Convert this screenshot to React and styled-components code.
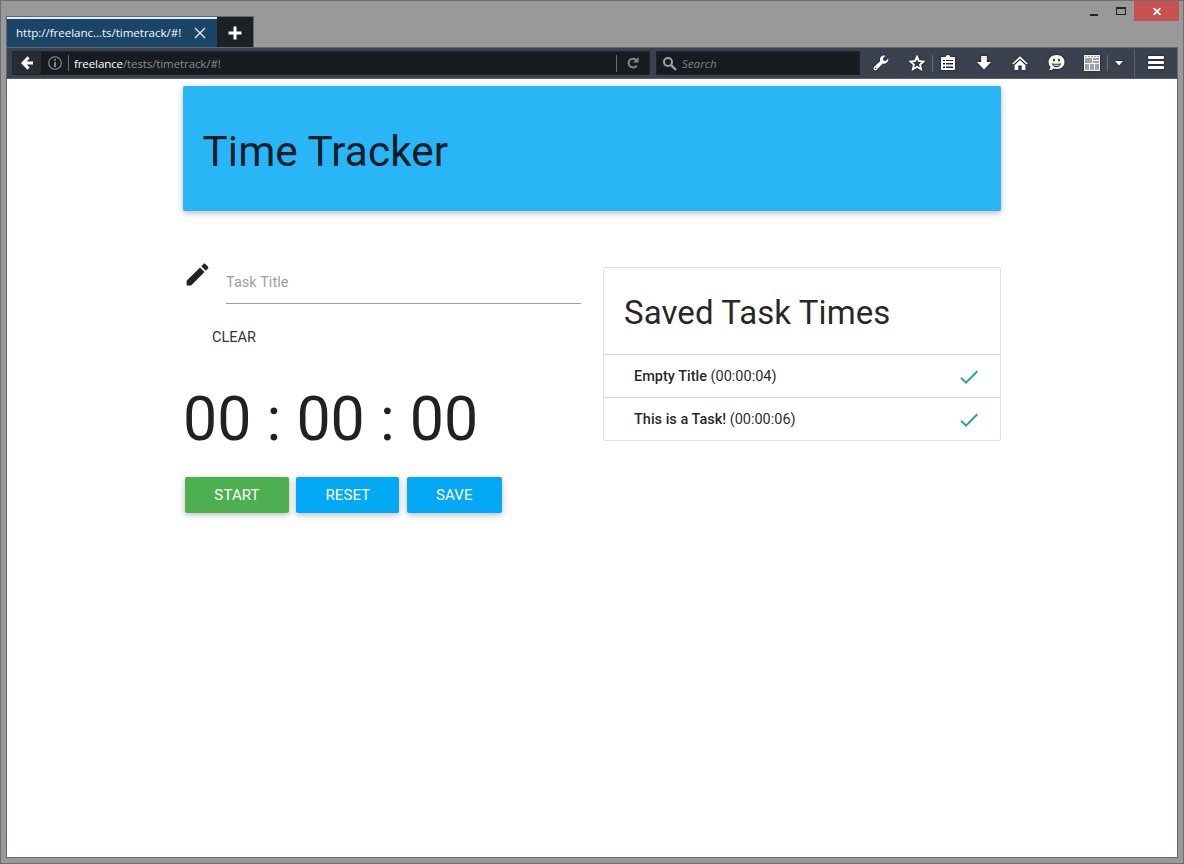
import React from "react";
import styled, { createGlobalStyle } from "styled-components";

const Global = createGlobalStyle`
  *, *::before, *::after { box-sizing: border-box; }
  body { margin: 0; overflow: hidden; }
  h1, h2, h3, p, ul { margin: 0; padding: 0; font-weight: 400; }
  button { font: inherit; border: 0; padding: 0; background: none; color: inherit; }
  svg { display: block; flex: none; }
`;

const Window = styled.div`
  width: 1184px;
  height: 864px;
  display: flex;
  flex-direction: column;
  background: #999;
  border: 1px solid #6e6e6e;
  padding: 0 5px 5px;
  font-family: "Open Sans", "Noto Sans", sans-serif;
  font-size: 11.6px;
`;

const TitleBar = styled.header`
  height: 46px;
  display: flex;
  align-items: flex-start;
  justify-content: space-between;
`;

const Tabs = styled.div`
  display: flex;
  height: 31px;
  margin-top: 15px;
  border: 1px solid #5e6a73;
  border-bottom: 0;
  background: #1c2126;
`;

const Tab = styled.div`
  width: 210px;
  display: flex;
  align-items: center;
  justify-content: space-between;
  padding: 0 11px 0 9px;
  background: #1b4566;
  border-top: 2px solid #d7efff;
  color: #f5f7fa;
  white-space: nowrap;
`;

const TabTitle = styled.span`
  padding-bottom: 2px;
  letter-spacing: -0.05px;
`;

const NewTab = styled.button`
  width: 36px;
  display: grid;
  place-items: center;
  padding-top: 1px;
`;

const WindowControls = styled.div`
  display: flex;
  height: 20px;
  margin-right: -1px;
`;

const WindowButton = styled.button`
  width: ${(p) => p.$w}px;
  height: 20px;
  display: grid;
  place-items: center;
  background: ${(p) => (p.$danger ? "#c75050" : "transparent")};
`;

const Browser = styled.div`
  flex: 1;
  display: flex;
  flex-direction: column;
  border: 1px solid #5e6a73;
`;

const Toolbar = styled.nav`
  height: 31px;
  flex: none;
  display: flex;
  align-items: center;
  padding: 0 0 0 5px;
  background: #3b424f;
  border-bottom: 1px solid #5c6065;
`;

const Field = styled.div`
  flex: none;
  width: ${(p) => p.$w}px;
  height: 24px;
  margin-right: 6px;
  padding-left: ${(p) => p.$inset || 0}px;
  display: flex;
  align-items: center;
  background: #181b1f;
  border: 1px solid #1f242a;
  border-radius: 1px;
  color: #8a8d90;
`;

const BackButton = styled.button`
  width: 28px;
  height: 22px;
  display: grid;
  place-items: center;
  background: #272c35;
`;

const IdentityButton = styled.button`
  width: 27px;
  display: grid;
  place-items: center;
`;

const Separator = styled.span`
  width: 1px;
  height: ${(p) => p.$h || 16}px;
  margin-left: ${(p) => p.$gap || 0}px;
  background: ${(p) => p.$color || "#666c75"};
`;

const Address = styled.span`
  flex: 1;
  padding-left: 5px;
  letter-spacing: -0.14px;
  white-space: nowrap;
  b { font-weight: 400; color: #fff; }
`;

const ReloadButton = styled.button`
  width: 32px;
  display: grid;
  place-items: center;
`;

const SearchHint = styled.span`
  padding-left: 5px;
  font-style: italic;
  color: #7e8184;
`;

const Tools = styled.div`
  flex: 1;
  height: 30px;
  display: flex;
  align-items: center;
`;

const Tool = styled.button`
  width: ${(p) => p.$w || 30}px;
  height: 30px;
  margin-left: ${(p) => p.$gap || 0}px;
  display: grid;
  place-items: center;
  svg { filter: drop-shadow(0 0 1px #10151c); }
`;

const Page = styled.main`
  flex: 1;
  background: #fff;
  font-family: Roboto, sans-serif;
  font-size: 14.5px;
  line-height: 1.5;
  color: rgba(0, 0, 0, 0.87);
`;

const Container = styled.div`
  width: 818px;
  margin: 0 auto;
  padding-top: 7px;
`;

const Banner = styled.section`
  height: 125px;
  padding: 43px 19.5px 0;
  border-radius: 2px;
  background: #29b6f6;
  box-shadow: 0 2px 5px 0 rgba(0, 0, 0, 0.16), 0 2px 10px 0 rgba(0, 0, 0, 0.12);
`;

const BannerTitle = styled.h1`
  font-size: 42.34px;
  line-height: 46.6px;
  letter-spacing: 0.05px;
`;

const Columns = styled.div`
  display: grid;
  grid-template-columns: 398px 398px;
  justify-content: space-between;
  align-items: start;
  margin-top: 56px;
`;

const Tracker = styled.section`
  display: flex;
  flex-direction: column;
  align-items: flex-start;
`;

const TitleField = styled.label`
  width: 100%;
  height: 37px;
  display: flex;
  justify-content: space-between;
  align-items: flex-end;
  svg { align-self: flex-start; margin: -7px 0 0 -0.5px; }
`;

const TitleInput = styled.span`
  width: 355px;
  height: 43px;
  padding-top: 11px;
  border-bottom: 1px solid #9e9e9e;
  color: #9e9e9e;
  letter-spacing: 0.05px;
`;

const FlatButton = styled.button`
  height: 36px;
  margin-top: 16px;
  padding: 0 29px;
  line-height: 36px;
  color: #343434;
  text-transform: uppercase;
`;

const Clock = styled.h2`
  margin: 30px 0 0 0;
  font-size: 60.9px;
  line-height: 67px;
  white-space: pre;
`;

const Actions = styled.div`
  display: flex;
  gap: 7.45px;
  margin: 24px 0 0 2px;
`;

const ActionButton = styled.button`
  width: ${(p) => p.$w}px;
  height: 36px;
  padding-top: 1px;
  border-radius: 2px;
  background: ${(p) => (p.$primary ? "#4caf50" : "#03a9f4")};
  color: #fff;
  font-size: 15px;
  line-height: 35px;
  letter-spacing: 0.12px;
  text-align: center;
  text-transform: uppercase;
  box-shadow: 0 2px 5px 0 rgba(0, 0, 0, 0.16), 0 2px 10px 0 rgba(0, 0, 0, 0.12);
`;

const Collection = styled.ul`
  list-style: none;
  border: 1px solid #e0e0e0;
  border-radius: 2px;
`;

const CollectionHeader = styled.li`
  height: 86px;
  padding: 27px 20px 0;
`;

const CollectionTitle = styled.h3`
  font-size: 33.06px;
  line-height: 36.4px;
  letter-spacing: 0.06px;
`;

const CollectionItem = styled.li`
  height: 43px;
  display: flex;
  justify-content: space-between;
  padding: 11px 19.5px 0 30px;
  border-top: 1px solid #e0e0e0;
  line-height: 22px;
  b { font-weight: 500; }
  svg { margin-top: -1px; }
`;

const tasks = [
  { title: "Empty Title", time: "00:00:04" },
  { title: "This is a Task!", time: "00:00:06" },
];

const Check = () => (
  <svg width="24" height="24" viewBox="0 0 24 24" fill="#26a69a">
    <path d="M9 16.17 4.83 12l-1.42 1.41L9 19 21 7l-1.41-1.41z" />
  </svg>
);

export default function App() {
  return (
    <Window>
      <Global />
      <TitleBar>
        <Tabs>
          <Tab>
            <TabTitle>http://freelanc...ts/timetrack/#!</TabTitle>
            <svg width="12" height="12" viewBox="0 0 12 12" stroke="#e8eef4" strokeWidth="1.3">
              <path d="M1 1l10 10M11 1L1 11" />
            </svg>
          </Tab>
          <NewTab>
            <svg width="14" height="14" viewBox="0 0 14 14" fill="#fff">
              <path d="M5.5 0.5h3v5h5v3h-5v5h-3v-5h-5v-3h5z" />
            </svg>
          </NewTab>
        </Tabs>
        <WindowControls>
          <WindowButton $w={27}>
            <svg width="8" height="12" viewBox="0 0 8 12" fill="#222">
              <path d="M0 9h8v2H0z" />
            </svg>
          </WindowButton>
          <WindowButton $w={27}>
            <svg width="10" height="8" viewBox="0 0 10 8" fill="#222">
              <path d="M0 0h10v8H0zM1 2v5h8V2z" fillRule="evenodd" />
            </svg>
          </WindowButton>
          <WindowButton $w={45} $danger>
            <svg width="8" height="7" viewBox="0 0 8 7" stroke="#fff" strokeWidth="1.8">
              <path d="M0.5 0l7 7M7.5 0l-7 7" />
            </svg>
          </WindowButton>
        </WindowControls>
      </TitleBar>
      <Browser>
        <Toolbar>
          <Field $w={638}>
            <BackButton>
              <svg width="12" height="14" viewBox="0 0 12 14" fill="none" stroke="#fff" strokeWidth="3">
                <path d="M7.6 1.4L2.1 7l5.5 5.6M2.5 7H12" />
              </svg>
            </BackButton>
            <IdentityButton>
              <svg width="14" height="14" viewBox="0 0 14 14" fill="none" stroke="#8f9193">
                <circle cx="7" cy="7" r="6.3" strokeWidth="1.1" />
                <path d="M7 3v1.8M7 6v5" strokeWidth="1.8" />
              </svg>
            </IdentityButton>
            <Separator />
            <Address><b>freelance</b>/tests/timetrack/#!</Address>
            <Separator $h={17} />
            <ReloadButton>
              <svg width="12" height="12" viewBox="0 0 12 12" fill="none" stroke="#85888b" strokeWidth="2">
                <path d="M9.6 8.6A4.4 4.4 0 1 1 9 2.8" />
                <path d="M11.5 0v5.6H6z" fill="#85888b" stroke="none" />
              </svg>
            </ReloadButton>
          </Field>
          <Field $w={204} $inset={5}>
            <svg width="15" height="15" viewBox="0 0 15 15" fill="none" stroke="#a0a2a4">
              <circle cx="6" cy="6" r="4" strokeWidth="2" />
              <path d="M9 9l5 5" strokeWidth="2.4" />
            </svg>
            <SearchHint>Search</SearchHint>
          </Field>
          <Tools>
            <Tool>
              <svg width="16" height="16" viewBox="0 0 16 16" fill="#fff">
                <path d="M15.2 3.6l-2.6 2.5-2.2-.5-.5-2.1L12.4.9C10.6.2 8.6.7 7.6 2.2c-.8 1.2-.9 2.6-.4 3.8L1 12c-.7.7-.7 1.9 0 2.7s1.9.7 2.7 0l6.1-6.2c1.3.4 2.8.2 3.9-.7 1.4-1.1 1.9-2.7 1.5-4.2zM2.6 14.1a.8.8 0 1 1 0-1.6.8.8 0 0 1 0 1.6z" />
              </svg>
            </Tool>
            <Tool $gap={6}>
              <svg width="16" height="16" viewBox="0 0 16 16" fill="none" stroke="#fff" strokeWidth="1.9">
                <path d="M8 1.7l1.9 4.3 4.7.5-3.5 3.1 1 4.6L8 11.8l-4.1 2.4 1-4.6L1.4 6.5 6.1 6z" />
              </svg>
            </Tool>
            <Separator $h={17} />
            <Tool>
              <svg width="14" height="16" viewBox="0 0 14 16" fill="#fff">
                <path fillRule="evenodd" d="M0 3q0-1 1-1h3.5q.3-2 2.5-2t2.5 2H13q1 0 1 1v11q0 1-1 1H1q-1 0-1-1zM2 5v1h2V5zM5 5v1h7V5zM2 8v1.5h2V8zM5 8v1.5h7V8zM2 11.5V13h2v-1.5zM5 11.5V13h7v-1.5z" />
              </svg>
            </Tool>
            <Tool $w={42}>
              <svg width="14" height="14" viewBox="0 0 14 14" fill="#fff">
                <path d="M4.2 0h5.6v6H14l-7 7.5L0 6h4.2z" />
              </svg>
            </Tool>
            <Tool>
              <svg width="16" height="15" viewBox="0 0 16 15" fill="none" stroke="#fff">
                <path d="M.8 8L8 1.3 15.2 8" strokeWidth="1.7" />
                <path d="M8 4l5.5 5.2V14H9.7V9.500H6.3V14H2.5V9.2z" fill="#fff" stroke="none" />
              </svg>
            </Tool>
            <Tool $w={42}>
              <svg width="17" height="16" viewBox="0 0 17 16" fill="#fff">
                <path d="M8.7 0C13.2 0 16.5 2.8 16.5 7s-3.3 7-7.8 7c-1.2 0-2.2-.2-3.1-.5C4.4 14.6 2.8 15.2 1 15c1-.8 1.5-1.9 1.5-3C1.3 10.700.6 9 .6 7c0-4.2 3.5-7 8.1-7z" />
                <ellipse cx="6" cy="5" rx="1" ry="1.5" fill="#2d333d" />
                <ellipse cx="11" cy="5" rx="1" ry="1.5" fill="#2d333d" />
                <path d="M3.8 8.2q4.7 1.2 9.4 0-1 4-4.7 4t-4.7-4z" fill="#2d333d" />
                <path d="M5.5 9.4q3 .6 6 0l-.4 1q-2.6.5-5.2 0z" />
              </svg>
            </Tool>
            <Tool>
              <svg width="16" height="16" viewBox="0 0 16 16">
                <path d="M0 0h16v16H0z" fill="#f2f2f2" />
                <path d="M1 1h2v1H1zM4 1h2v1H4zM7 1h2v1H7zM10 1h2v1h-2zM13 1h2v1h-2zM1 3h7v5H1zM9 3h6v2H9zM9 6h6v2H9zM1 9h4v6H1zM6 9h4v6H6zM11 9h4v6h-4z" fill="#a3a3a3" />
              </svg>
            </Tool>
            <Separator $h={16} />
            <Tool $w={22}>
              <svg width="8" height="5" viewBox="0 0 8 5" fill="#fff">
                <path d="M0 0h8L4 4.5z" />
              </svg>
            </Tool>
            <Separator $h={28} $gap={4} $color="#59616c" />
            <Tool $w={42}>
              <svg width="16" height="14" viewBox="0 0 16 14" fill="#fff">
                <rect width="16" height="3" rx="1" />
                <rect y="5" width="16" height="3" rx="1" />
                <rect y="10" width="16" height="3" rx="1" />
              </svg>
            </Tool>
          </Tools>
        </Toolbar>
        <Page>
          <Container>
            <Banner>
              <BannerTitle>Time Tracker</BannerTitle>
            </Banner>
            <Columns>
              <Tracker>
                <TitleField>
                  <svg width="29" height="29" viewBox="0 0 24 24" fill="#212121">
                    <path d="M3 17.25V21h3.75L17.81 9.94l-3.75-3.75L3 17.25zM20.71 7.04c.39-.39.39-1.02 0-1.41l-2.34-2.34c-.39-.39-1.02-.39-1.41 0l-1.83 1.83 3.75 3.75 1.83-1.83z" />
                  </svg>
                  <TitleInput>Task Title</TitleInput>
                </TitleField>
                <FlatButton>Clear</FlatButton>
                <Clock>00 : 00 : 00</Clock>
                <Actions>
                  <ActionButton $w={104} $primary>Start</ActionButton>
                  <ActionButton $w={103}>Reset</ActionButton>
                  <ActionButton $w={95}>Save</ActionButton>
                </Actions>
              </Tracker>
              <Collection>
                <CollectionHeader>
                  <CollectionTitle>Saved Task Times</CollectionTitle>
                </CollectionHeader>
                {tasks.map((task) => (
                  <CollectionItem key={task.title}>
                    <span><b>{task.title}</b> ({task.time})</span>
                    <Check />
                  </CollectionItem>
                ))}
              </Collection>
            </Columns>
          </Container>
        </Page>
      </Browser>
    </Window>
  );
}
